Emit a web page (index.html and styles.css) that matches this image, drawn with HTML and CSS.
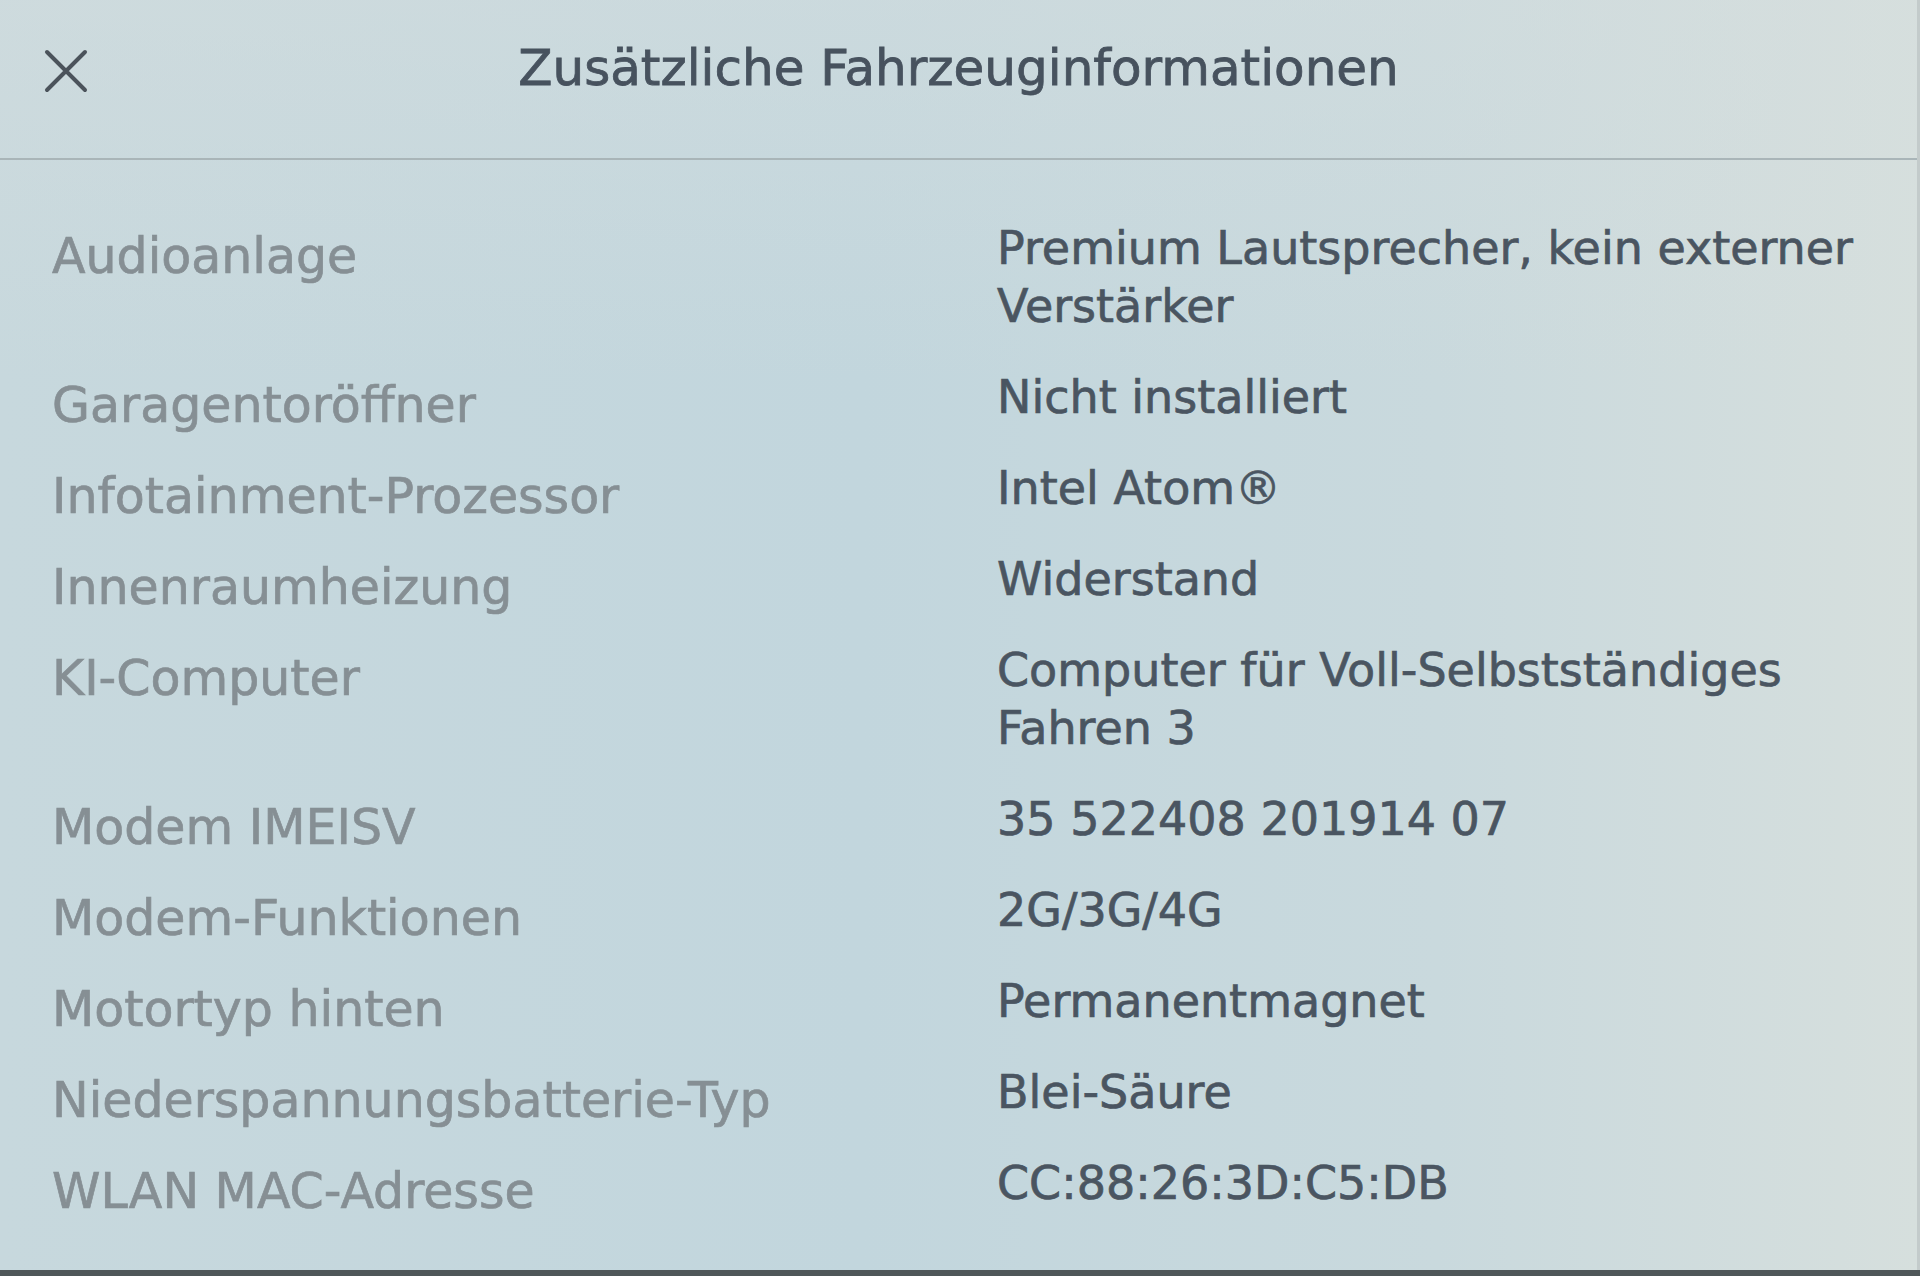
FILE: index.html
```html
<!DOCTYPE html>
<html lang="de">
<head>
    <meta charset="UTF-8">
    <title>Zusätzliche Fahrzeuginformationen</title>
    <link rel="stylesheet" href="styles.css">
</head>
<body>
    <main class="sheet">
        <header class="sheet-header">
            <button class="close-btn" type="button" aria-label="Schließen">
                <svg width="46" height="46" viewBox="0 0 46 46">
                    <path d="M4 4 L42 42 M42 4 L4 42" stroke="currentColor" stroke-width="4" stroke-linecap="round" fill="none"/>
                </svg>
            </button>
            <h1 class="sheet-title">Zusätzliche Fahrzeuginformationen</h1>
            <span></span>
        </header>

        <section class="specs">
            <div class="spec-row">
                <span class="spec-label">Audioanlage</span>
                <span class="spec-value">Premium Lautsprecher, kein externer Verstärker</span>
            </div>
            <div class="spec-row">
                <span class="spec-label">Garagentoröffner</span>
                <span class="spec-value">Nicht installiert</span>
            </div>
            <div class="spec-row">
                <span class="spec-label">Infotainment-Prozessor</span>
                <span class="spec-value">Intel Atom®</span>
            </div>
            <div class="spec-row">
                <span class="spec-label">Innenraumheizung</span>
                <span class="spec-value">Widerstand</span>
            </div>
            <div class="spec-row">
                <span class="spec-label">KI-Computer</span>
                <span class="spec-value">Computer für Voll-Selbstständiges Fahren 3</span>
            </div>
            <div class="spec-row">
                <span class="spec-label">Modem IMEISV</span>
                <span class="spec-value">35 522408 201914 07</span>
            </div>
            <div class="spec-row">
                <span class="spec-label">Modem-Funktionen</span>
                <span class="spec-value">2G/3G/4G</span>
            </div>
            <div class="spec-row">
                <span class="spec-label">Motortyp hinten</span>
                <span class="spec-value">Permanentmagnet</span>
            </div>
            <div class="spec-row">
                <span class="spec-label">Niederspannungsbatterie-Typ</span>
                <span class="spec-value">Blei-Säure</span>
            </div>
            <div class="spec-row">
                <span class="spec-label">WLAN MAC-Adresse</span>
                <span class="spec-value">CC:88:26:3D:C5:DB</span>
            </div>
        </section>
    </main>
</body>
</html>
```

FILE: styles.css
```css
html, body {
    margin: 0;
    padding: 0;
}

body {
    background-color: #4f5759;
    font-family: 'DejaVu Sans', 'Liberation Sans', sans-serif;
}

.sheet {
    box-sizing: border-box;
    height: 1270px;
    background:
        linear-gradient(180deg, rgba(214, 222, 222, 0.45) 0%, rgba(214, 222, 222, 0) 30%),
        linear-gradient(90deg, #c7d8dd 0%, #c2d6dd 45%, #c9d9dd 75%, #d6dfdd 100%);
    border-right: 3px solid #c3cbcb;
}

/* header: close button left, title centred on the page */
.sheet-header {
    box-sizing: border-box;
    height: 160px;
    padding-bottom: 22px;
    display: grid;
    grid-template-columns: 1fr auto 1fr;
    align-items: center;
    border-bottom: 2px solid #a9b5b8;
}

.close-btn {
    justify-self: start;
    margin-left: 43px;
    margin-top: 6px;
    padding: 0;
    border: none;
    background: none;
    color: #4b535b;
    display: flex;
    cursor: pointer;
}

.sheet-title {
    margin: 0;
    font-size: 50px;
    font-weight: normal;
    line-height: 58px;
    color: #47525e;
    -webkit-text-stroke: 0.8px #47525e;
}

/* label / value list */
.specs {
    display: flex;
    flex-direction: column;
    gap: 33px;
    padding: 59px 40px 0 52px;
}

.spec-row {
    display: grid;
    grid-template-columns: 945px 1fr;
    align-items: start;
    line-height: 58px;
}

/* labels sit a little lower than the first value line */
.spec-label {
    padding-top: 9px;
    margin-bottom: -9px;
    font-size: 49px;
    color: #868f94;
    -webkit-text-stroke: 0.7px #868f94;
}

.spec-value {
    font-size: 46px;
    color: #4a5561;
    -webkit-text-stroke: 0.7px #4a5561;
}
```
